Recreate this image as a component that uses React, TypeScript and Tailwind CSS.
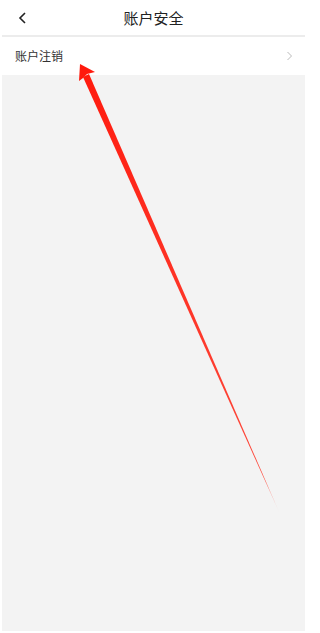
export default function App() {
  return (
    <div
      className="relative h-[633px] w-[311px] overflow-hidden bg-white pl-[2px] pr-[6px] pb-[2px]"
      style={{ fontFamily: '"Noto Sans CJK SC", "Noto Sans", sans-serif' }}
    >
      <div className="flex h-full flex-col">
        <div className="relative flex h-[37px] items-center justify-center border-b-2 border-[#ececec] pt-[1px]">
          <svg
            className="absolute left-[16px] top-[12px]"
            width="10"
            height="12"
            viewBox="0 0 10 12"
            fill="none"
            stroke="#222"
            strokeWidth="1.6"
          >
            <path d="M7 1 2 6 7 11" />
          </svg>
          <span className="text-[15px] text-[#222]">账户安全</span>
        </div>
        <div className="flex h-[38px] items-center justify-between bg-white pl-[13px] pr-[12px]">
          <span className="text-[12px] text-[#333]">账户注销</span>
          <svg width="7" height="10" viewBox="0 0 7 10" fill="none" stroke="#bbb" strokeWidth="1">
            <path d="M1.5 1 5.5 5 1.5 9" />
          </svg>
        </div>
        <div className="flex-1 bg-[#f3f3f3]" />
      </div>
      <svg className="pointer-events-none absolute left-0 top-0" width="311" height="633">
        <defs>
          <linearGradient id="fade" x1="280" y1="514" x2="80" y2="65" gradientUnits="userSpaceOnUse">
            <stop offset="0" stopColor="#ff2a1a" stopOpacity="0" />
            <stop offset="0.08" stopColor="#ff2a1a" stopOpacity="0.85" />
            <stop offset="1" stopColor="#ff1a0d" />
          </linearGradient>
        </defs>
        <polygon points="280,514 89,74 83,77" fill="url(#fade)" />
        <polygon points="80,64 95,72 87,74 83,78 79,81" fill="#ff1a0d" />
      </svg>
    </div>
  );
}
